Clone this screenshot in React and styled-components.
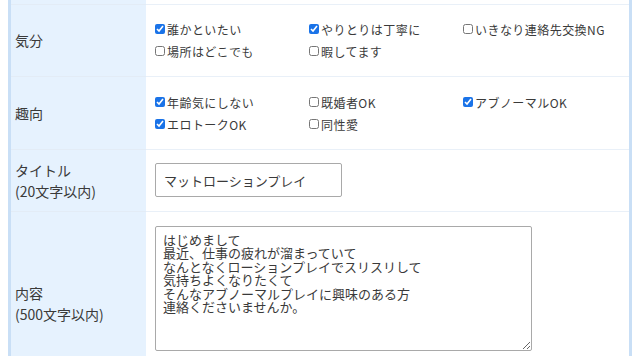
import styled, { createGlobalStyle } from "styled-components";

const GlobalStyle = createGlobalStyle`
  html, body {
    margin: 0;
    padding: 0;
    background: #ffffff;
    font-family: "Noto Sans CJK JP", "Noto Sans", sans-serif;
    color: #333;
  }
`;

const moods = [
  { label: "誰かといたい", checked: true },
  { label: "やりとりは丁寧に", checked: true },
  { label: "いきなり連絡先交換NG", checked: false },
  { label: "場所はどこでも", checked: false },
  { label: "暇してます", checked: false },
];

const tastes = [
  { label: "年齢気にしない", checked: true },
  { label: "既婚者OK", checked: false },
  { label: "アブノーマルOK", checked: true },
  { label: "エロトークOK", checked: true },
  { label: "同性愛", checked: false },
];

const body = `はじめまして
最近、仕事の疲れが溜まっていて
なんとなくローションプレイでスリスリして
気持ちよくなりたくて
そんなアブノーマルプレイに興味のある方
連絡くださいませんか。`;

export default function App() {
  return (
    <>
      <GlobalStyle />
      <Page>
        <FormTable>
          <Label $stub />
          <Field $stub />

          <Label>気分</Label>
          <Field $pad="13px 8px 14px 9px">
            <CheckGrid>
              {moods.map((m) => (
                <CheckItem key={m.label}>
                  <Box type="checkbox" defaultChecked={m.checked} />
                  {m.label}
                </CheckItem>
              ))}
            </CheckGrid>
          </Field>

          <Label>趣向</Label>
          <Field $pad="14px 8px 14px 9px">
            <CheckGrid>
              {tastes.map((m) => (
                <CheckItem key={m.label}>
                  <Box type="checkbox" defaultChecked={m.checked} />
                  {m.label}
                </CheckItem>
              ))}
            </CheckGrid>
          </Field>

          <Label>
            タイトル
            <br />
            (20文字以内)
          </Label>
          <Field $pad="13px 8px 14px 9px">
            <TitleInput defaultValue="マットローションプレイ" />
          </Field>

          <Label>
            内容
            <br />
            (500文字以内)
          </Label>
          <Field $pad="14px 8px 44px 9px">
            <BodyArea defaultValue={body} />
          </Field>
        </FormTable>
      </Page>
    </>
  );
}

const Page = styled.div`
  margin: 0 8px;
  border-left: 3px solid #c9dff6;
  border-right: 3px solid #c9dff6;
`;

const FormTable = styled.div`
  display: grid;
  grid-template-columns: 135px 1fr;
`;

const Label = styled.div`
  background: #e6f2fe;
  border-bottom: 1px solid #e3ecf6;
  padding: 0 4px;
  height: ${(p) => (p.$stub ? "4px" : "auto")};
  display: flex;
  align-items: center;
  font-size: 14px;
  line-height: 21px;
  color: #3a3a3a;
`;

const Field = styled.div`
  background: #fff;
  border-bottom: 1px solid #e9f0f8;
  padding: ${(p) => (p.$stub ? "0" : p.$pad)};
  height: ${(p) => (p.$stub ? "4px" : "auto")};
  display: flex;
  align-items: center;
`;

const CheckGrid = styled.div`
  display: grid;
  grid-template-columns: repeat(3, 154px);
`;

const CheckItem = styled.label`
  display: flex;
  align-items: center;
  height: 22px;
  font-size: 12px;
  letter-spacing: 0.45px;
  color: #3a3a3a;
  white-space: nowrap;
`;

const Box = styled.input`
  width: 10px;
  height: 10px;
  margin: 0 2px 0 0;
  accent-color: #1a73e8;
`;

const TitleInput = styled.input`
  width: 187px;
  height: 34px;
  box-sizing: border-box;
  border: 1px solid #a9a9a9;
  border-radius: 2px;
  padding: 0 8px;
  font-family: "Noto Sans CJK JP", sans-serif;
  font-size: 13px;
  color: #3a3a3a;
  outline: none;
`;

const BodyArea = styled.textarea`
  width: 377px;
  height: 125px;
  box-sizing: border-box;
  border: 1px solid #a9a9a9;
  border-radius: 2px;
  padding: 6px 7px;
  font-family: "Noto Sans CJK JP", sans-serif;
  font-size: 13px;
  line-height: 13.4px;
  color: #3a3a3a;
  resize: both;
  outline: none;
`;
